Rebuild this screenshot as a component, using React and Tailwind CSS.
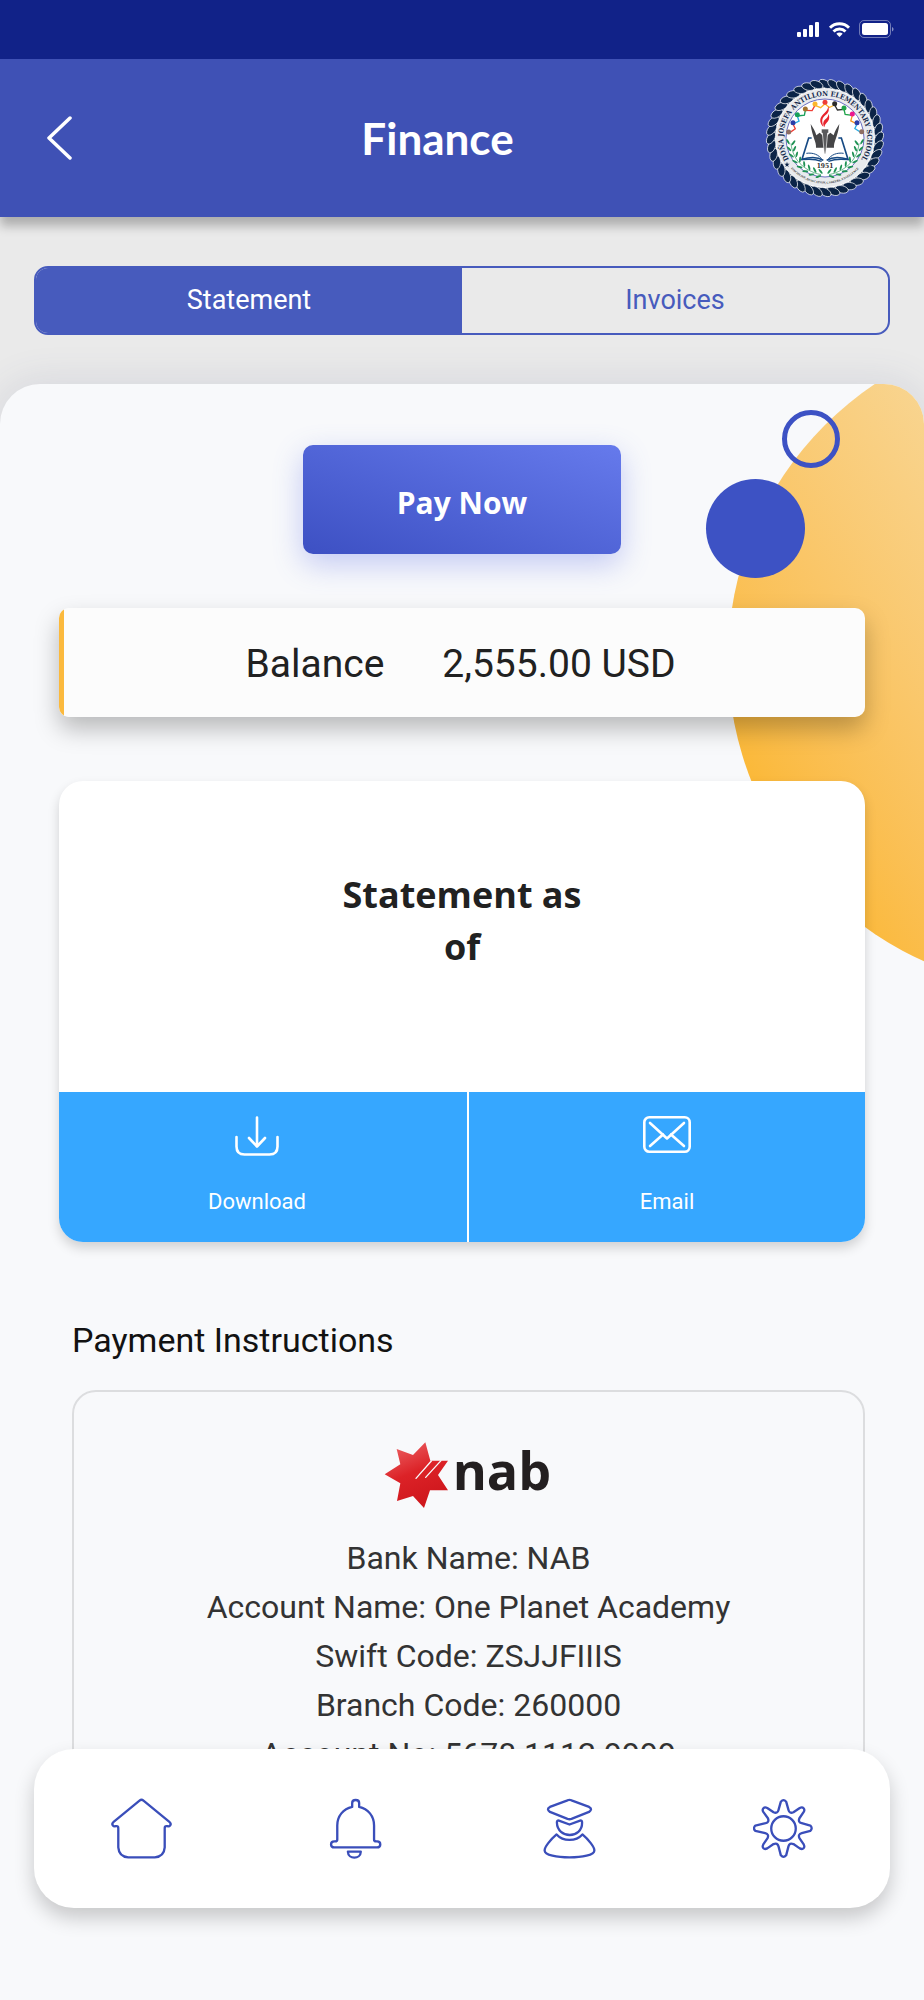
const BANK_DETAILS = [
  { label: "Bank Name", value: "NAB" },
  { label: "Account Name", value: "One Planet Academy" },
  { label: "Swift Code", value: "ZSJJFIIIS" },
  { label: "Branch Code", value: "260000" },
  { label: "Account No", value: "5678 1112 9999" },
];

const FIGURES = [
  { x: 71, y: 162, color: "#8d6e63" },
  { x: 84, y: 134, color: "#2b3ea8" },
  { x: 97, y: 110, color: "#16a05a" },
  { x: 121, y: 93, color: "#a3732f" },
  { x: 150, y: 78, color: "#fbb62b" },
  { x: 180, y: 73, color: "#ef3e36" },
  { x: 209, y: 77, color: "#2b2b2b" },
  { x: 237, y: 90, color: "#1fa34a" },
  { x: 262, y: 108, color: "#ec178f" },
  { x: 276, y: 134, color: "#2b3ea8" },
  { x: 290, y: 161, color: "#8d6e63" },
];

const ARM_COLORS = [
  "#ef3e36",
  "#29abe2",
  "#16a05a",
  "#ef3e36",
  "#fbb62b",
  "#fbb62b",
  "#2b2b2b",
  "#1fa34a",
  "#f7941d",
  "#29abe2",
];

const ROPE = Array.from({ length: 40 }, (_, i) => i * 9);
const LEAVES = [0, 1, 2, 3, 4, 5, 6, 7];

function StatusIcons() {
  return (
    <svg viewBox="0 0 98 20" className="h-5 w-[98px]" aria-hidden="true">
      <g fill="#fff">
        <rect x="1" y="12" width="4" height="5" rx="1" />
        <rect x="7" y="9" width="4" height="8" rx="1" />
        <rect x="13" y="5" width="4" height="12" rx="1" />
        <rect x="19" y="2" width="4" height="15" rx="1" />
        <path d="M43.500 17l-3.200-3.200a4.600 4.600 0 0 1 6.400 0z" />
        <rect x="66" y="3" width="26" height="12" rx="2.500" />
      </g>
      <g fill="none" stroke="#fff" strokeWidth="3">
        <path d="M34 7.700a13.600 13.600 0 0 1 19 0" />
        <path d="M37.500 11.500a8.700 8.700 0 0 1 12 0" />
      </g>
      <rect
        x="63.500"
        y=".500"
        width="31"
        height="17"
        rx="4.500"
        fill="none"
        stroke="#fff"
        strokeOpacity=".4"
      />
      <path d="M96 7c2 .8 2 3.700 0 4.500z" fill="#fff" fillOpacity=".5" />
    </svg>
  );
}

function Laurel() {
  return (
    <g>
      <path
        d="M78 196c4 46 36 82 90 94"
        fill="none"
        stroke="#1f9254"
        strokeWidth="2"
      />
      {LEAVES.map((n) => {
        const a = ((176 - n * 11) * Math.PI) / 180;
        const x = 180 + Math.cos(a) * 103;
        const y = 186 + Math.sin(a) * 103;
        return (
          <g key={n} transform={`translate(${x} ${y}) rotate(${-n * 11})`}>
            <ellipse
              cx="-6"
              cy="-6"
              rx="3"
              ry="9"
              fill="#1f9254"
              transform="rotate(-32)"
            />
            <ellipse
              cx="7"
              cy="-4"
              rx="3"
              ry="9"
              fill="#1f9254"
              transform="rotate(38)"
            />
          </g>
        );
      })}
    </g>
  );
}

function SchoolSeal() {
  return (
    <svg
      viewBox="0 0 360 360"
      className="size-[120px] shrink-0"
      role="img"
      aria-label="School seal"
    >
      <defs>
        <path id="seal-top" d="M180 306a126 126 0 1 1 1 0" />
        <path id="seal-bottom" d="M43 180a137 137 0 0 0 274 0" />
      </defs>
      <circle cx="180" cy="180" r="170" fill="#fff" />
      <circle
        cx="180"
        cy="180"
        r="160"
        fill="none"
        stroke="#0b2447"
        strokeWidth="20"
      />
      {ROPE.map((deg) => (
        <g key={deg} transform={`rotate(${deg} 180 180)`}>
          <ellipse
            cx="180"
            cy="18"
            rx="11"
            ry="20"
            fill="#0b2447"
            stroke="#fff"
            strokeWidth="2"
            transform="rotate(-60 180 18)"
          />
        </g>
      ))}
      <circle cx="180" cy="180" r="147" fill="#e9ebee" />
      <circle
        cx="180"
        cy="180"
        r="117"
        fill="#fff"
        stroke="#6a6fc0"
        strokeWidth="3"
      />
      <text
        fill="#12284b"
        fontSize="21"
        fontWeight="700"
        fontFamily="'DejaVu Serif Condensed', 'DejaVu Serif', serif"
        textAnchor="middle"
      >
        <textPath href="#seal-top" startOffset="50%">
          DOÑA JOSEFA ANTILLON ELEMENTARY SCHOOL
        </textPath>
      </text>
      <text
        fill="#333"
        fontSize="9"
        fontWeight="700"
        fontFamily="'Liberation Serif', serif"
        textAnchor="middle"
      >
        <textPath href="#seal-bottom" startOffset="50%">
          DISCIPLINE, DEDICATION, CAREERS, EXCELLENCE
        </textPath>
      </text>
      {[66, 316].map((x) => (
        <path
          key={x}
          d="M0-8l2 6h6l-5 4 2 6-5-4-5 4 2-6-5-4h6z"
          fill="#12284b"
          transform={`translate(${x} 259)`}
        />
      ))}

      {FIGURES.slice(1).map((f, i) => {
        const p = FIGURES[i];
        const mx = (p.x + f.x) / 2;
        const my = (p.y + f.y) / 2;
        return (
          <path
            key={f.x}
            d={`M${p.x} ${p.y + 4}L${mx + (180 - mx) * 0.13} ${my + (180 - my) * 0.13}L${f.x} ${f.y + 4}`}
            fill="none"
            stroke={ARM_COLORS[i]}
            strokeWidth="4"
          />
        );
      })}
      {FIGURES.map((f) => (
        <circle key={f.x} cx={f.x} cy={f.y} r="7.500" fill={f.color} />
      ))}

      <Laurel />
      <g transform="matrix(-1 0 0 1 360 0)">
        <Laurel />
      </g>

      <g fill="none" stroke="#174a84" strokeWidth="5">
        <path d="M140 180h-9l-20 64c26-8 48-7 64 3" />
        <path d="M112 245c24-3 42-1 58 5" strokeWidth="4" />
        <path d="M124 226c20-3 38 4 48 20" strokeWidth="3" />
        <path d="M220 180h9l20 64c-26-8-48-7-64 3" />
        <path d="M248 245c-24-3-42-1-58 5" strokeWidth="4" />
        <path d="M236 226c-20-3-38 4-48 20" strokeWidth="3" />
      </g>
      <path
        d="M137 138c8 12 14 23 17 34l10-8c8 5 12 12 13 22v23h-24c2-18-12-32-16-71z"
        fill="#454547"
      />
      <path
        d="M223 138c-8 12-14 23-17 34l-10-8c-8 5-12 12-13 22v23h24c-2-18 12-32 16-71z"
        fill="#454547"
      />
      <path
        d="M169 153h22v12h-3l-6 62h-4l-6-62h-3z"
        fill="#5a5a5c"
        stroke="#fff"
        strokeWidth="2"
      />
      <path
        d="M190 84c4 16-1 21-9 28-9 8-12 14-6 34-11-10-12-24-4-33 8-10 17-13 19-29z"
        fill="#e8252e"
      />
      <path
        d="M191 107c4 15 0 21-6 27-5 5-6 9-7 14-6-12-3-19 4-25 5-5 8-9 9-16z"
        fill="#e8252e"
      />
      <text
        x="180"
        y="271"
        textAnchor="middle"
        fill="#333"
        fontSize="20"
        fontWeight="700"
        fontFamily="'DejaVu Serif Condensed', 'DejaVu Serif', serif"
      >
        1951
      </text>
    </svg>
  );
}

function NabLogo() {
  return (
    <svg
      viewBox="94 60 510 210"
      className="h-[70px] w-[170px] overflow-visible"
      role="img"
      aria-label="nab"
    >
      <defs>
        <linearGradient id="nab-star" x1="0" y1="0" x2=".4" y2="1">
          <stop offset="0" stopColor="#ee6a6c" />
          <stop offset=".55" stopColor="#dc2227" />
          <stop offset="1" stopColor="#cf171d" />
        </linearGradient>
      </defs>
      <path
        d="M96 163l47-30-11-46 49 18 37-38 15 55h53l-30 43 30 46h-54l-18 53-33-36-48 15 10-53z"
        fill="url(#nab-star)"
      />
      <path
        d="M190 175l46-52M219 172l46-50"
        stroke="#f8f9fb"
        strokeWidth="4"
        strokeLinecap="round"
      />
      <text
        x="300"
        y="211"
        fill="#231f20"
        fontSize="156"
        fontWeight="700"
        fontFamily="'Open Sans', sans-serif"
      >
        nab
      </text>
    </svg>
  );
}

function NavIcon({ children }) {
  return (
    <svg
      viewBox="0 0 184 184"
      className="size-[61px]"
      fill="none"
      stroke="currentColor"
      strokeWidth="7"
      strokeLinecap="round"
      strokeLinejoin="round"
      aria-hidden="true"
    >
      {children}
    </svg>
  );
}

const NAV_ITEMS = [
  {
    label: "Home",
    icon: (
      <path d="M86 8L7 73c-7 7 0 14 7 12h3q5 0 5 6v58q2 28 30 30h80q28-2 30-30V91q0-6 5-6h3c7 2 14-5 7-12L98 8q-6-5-12 0z" />
    ),
  },
  {
    label: "Notifications",
    icon: (
      <>
        <path d="M82 27V15c0-12 21-12 21 0v12c27 6 45 27 45 56v42q0 6 6 6h3c13 0 13 18 0 18H28c-13 0-13-18 0-18h3q6 0 6-6V83c0-29 18-50 45-56z" />
        <path d="M69 162h39c-1 24-38 24-39 0z" />
      </>
    ),
  },
  {
    label: "Students",
    icon: (
      <>
        <path d="M86 7L33 27q-12 7 0 15l53 21q6 2 12 0l53-21q12-8 0-15L98 7q-6-3-12 0z" />
        <path d="M60 68l32 12 32-12q6-1 6 6c1 50-75 50-76 0q0-7 6-6z" />
        <path d="M53 110C34 126 17 148 17 158c0 28 150 28 150 0 0-10-17-32-36-48-20 22-58 22-78 0z" />
      </>
    ),
  },
  {
    label: "Settings",
    icon: (
      <>
        <path d="M84 11q8-9 16 0l7 25q3 12 15 7l19-13c10-5 17 3 12 12l-13 19q-5 12 7 15l26 7q8 9 0 16l-26 7q-12 3-7 15l13 19c5 10-2 17-12 12l-19-13q-12-5-15 7l-7 27q-8 9-16 0l-7-27q-3-12-15-7l-19 13c-10 5-17-2-12-12l13-19q5-12-7-15L7 99q-8-7 0-16l31-7q12-3 7-15L31 42c-5-9 2-17 12-12l19 13q12 5 15-7z" />
        <circle cx="92" cy="92" r="37" />
      </>
    ),
  },
];

function Header() {
  return (
    <header className="relative z-10 shadow-[0_9px_10px_rgba(0,0,0,0.26)]">
      <div className="flex h-[59px] items-center justify-end bg-[#112288] pr-[30px]">
        <StatusIcons />
      </div>
      <div className="flex h-[158px] items-center bg-[#3f51b5] pr-[39px] pl-[46px]">
        <button type="button" aria-label="Back" className="w-16">
          <svg
            viewBox="0 0 26 46"
            className="h-[46px] w-[26px]"
            fill="none"
            stroke="#fff"
            strokeWidth="3.500"
            strokeLinecap="round"
            strokeLinejoin="round"
          >
            <path d="M24 3L3 23l21 20" />
          </svg>
        </button>
        <h1 className="flex-1 text-center font-['Lato',sans-serif] text-[44px] leading-none font-bold text-white">
          Finance
        </h1>
        <SchoolSeal />
      </div>
    </header>
  );
}

function Tabs() {
  return (
    <div className="mx-[34px] mt-[49px] flex h-[69px] overflow-hidden rounded-[14px] border-2 border-[#475bbd] text-[27px]">
      <button type="button" className="flex-1 bg-[#475bbd] text-white">
        Statement
      </button>
      <button type="button" className="flex-1 text-[#475bbd]">
        Invoices
      </button>
    </div>
  );
}

function Decoration() {
  return (
    <div aria-hidden="true">
      <div className="absolute -top-14 -right-[466px] size-[662px] rounded-full bg-linear-57 from-[#fbb93a] from-15% to-[#f8d796] to-57%" />
      <div className="absolute top-[26px] right-[84px] size-[58px] rounded-full border-[5px] border-[#3d52c4]" />
      <div className="absolute top-[95px] right-[119px] size-[99px] rounded-full bg-[#3d52c4]" />
    </div>
  );
}

function BalanceCard() {
  return (
    <section className="mt-[54px] overflow-hidden rounded-[10px] shadow-[0_12px_24px_rgba(0,0,0,0.26)]">
      <div className="flex h-[109px] items-center justify-center gap-[58px] border-l-[5px] border-[#fbb93d] bg-[#fcfcfc] pt-1 pr-2 text-[39px] text-[#212121]">
        <span>Balance</span>
        <span>2,555.00 USD</span>
      </div>
    </section>
  );
}

function StatementCard() {
  return (
    <section className="mt-16 overflow-hidden rounded-3xl bg-white shadow-[0_6px_12px_rgba(0,0,0,0.16)]">
      <h2 className="mx-auto w-[260px] pt-[88px] pb-[119px] text-center font-['Open_Sans',sans-serif] text-[36px] leading-[52px] font-bold text-[#212121]">
        Statement as of
      </h2>
      <div className="flex h-[150px] divide-x-2 divide-white bg-[#36a7ff] text-[22px] leading-7 text-white">
        <button
          type="button"
          className="flex flex-1 flex-col items-center justify-between pt-6 pr-3 pb-[26px]"
        >
          <svg
            viewBox="0 0 44 40"
            className="h-10 w-11"
            fill="none"
            stroke="#fff"
            strokeWidth="2.600"
            strokeLinecap="round"
            strokeLinejoin="round"
            aria-hidden="true"
          >
            <path d="M22 1.500V30M14 22l8 8.500L30 22" />
            <path d="M1.500 21v9.500q0 8 8 8h25q8 0 8-8V21" />
          </svg>
          Download
        </button>
        <button
          type="button"
          className="flex flex-1 flex-col items-center justify-between pt-6 pb-[26px]"
        >
          <svg
            viewBox="0 0 48 37"
            className="h-[37px] w-12"
            fill="none"
            stroke="#fff"
            strokeWidth="2.600"
            strokeLinecap="round"
            strokeLinejoin="round"
            aria-hidden="true"
          >
            <rect x="1.300" y="1.300" width="45.400" height="34.400" rx="5" />
            <path d="M7 7l17 15.500L41 7" />
            <path d="M7 30l13-11.500M41 30L28 18.500" />
          </svg>
          Email
        </button>
      </div>
    </section>
  );
}

function PaymentInstructions() {
  return (
    <section className="mt-[74px] ml-[13px]">
      <h2 className="text-[34px] leading-[48px] text-[#121212]">
        Payment Instructions
      </h2>
      <div className="mt-[26px] flex flex-col items-center rounded-3xl border-2 border-[#dcdddf] pt-12 pb-9">
        <NabLogo />
        <ul className="mt-6 text-center text-[32px] leading-[49px] text-[#333]">
          {BANK_DETAILS.map(({ label, value }) => (
            <li key={label}>
              {label}: {value}
            </li>
          ))}
        </ul>
      </div>
    </section>
  );
}

function BottomNav() {
  return (
    <nav className="fixed inset-x-[34px] bottom-[92px] z-20 flex h-[159px] items-center rounded-[40px] bg-white text-[#3a4eba] shadow-[0_10px_20px_rgba(0,0,0,0.2)]">
      {NAV_ITEMS.map(({ label, icon }) => (
        <a
          key={label}
          href="#"
          aria-label={label}
          className="flex flex-1 justify-center"
        >
          <NavIcon>{icon}</NavIcon>
        </a>
      ))}
    </nav>
  );
}

export default function App() {
  return (
    <div className="flex min-h-screen flex-col bg-[#eaeaea] font-['Roboto',sans-serif]">
      <Header />
      <Tabs />
      <main className="relative mt-[49px] flex-1 overflow-hidden rounded-t-[40px] bg-[#f8f9fb] px-[59px] pt-[61px] pb-44 shadow-[0_0_40px_rgba(70,80,130,0.14)]">
        <Decoration />
        <div className="relative">
          <button
            type="button"
            className="mx-auto block h-[109px] w-[318px] rounded-[10px] bg-linear-to-tr from-[#3d50c3] to-[#667aec] pt-1.5 font-['Open_Sans',sans-serif] text-[30px] font-bold text-white shadow-[0_10px_30px_rgba(80,100,230,0.32)]"
          >
            Pay Now
          </button>
          <BalanceCard />
          <StatementCard />
          <PaymentInstructions />
        </div>
      </main>
      <BottomNav />
    </div>
  );
}
